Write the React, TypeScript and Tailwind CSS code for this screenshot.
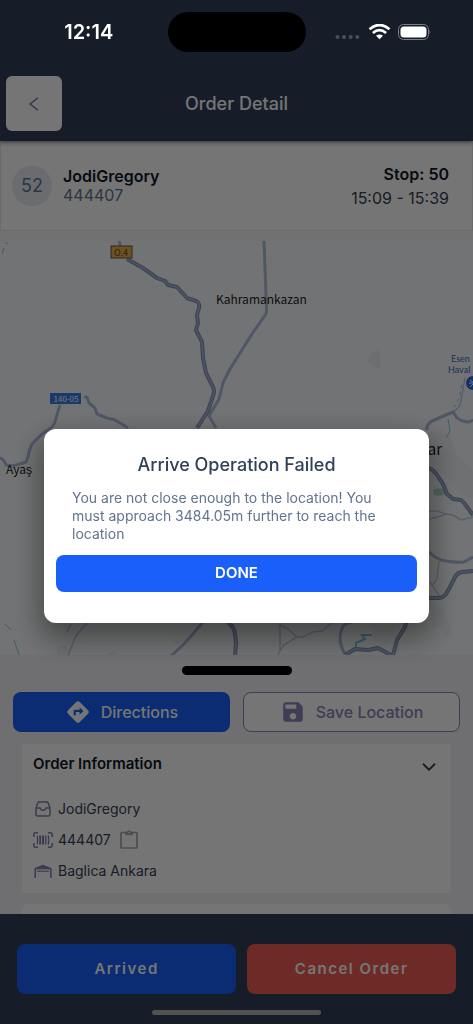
import { type ReactNode } from "react";
import { ChevronDown } from "lucide-react";
import { MdDirections, MdSave } from "react-icons/md";

interface Order {
  sequence: number;
  customer: string;
  orderNo: string;
  stop: number;
  window: string;
  address: string;
}

const order: Order = {
  sequence: 52,
  customer: "JodiGregory",
  orderNo: "444407",
  stop: 50,
  window: "15:09 - 15:39",
  address: "Baglica Ankara",
};

const highways = [
  "M127 259L143 268L157 278L165 281L168 285L177 287L187 298L196 301Q200 303 199 308L197 315L198 323L196 330L202 342L203 358L206 373L213 387Q215 391 213 396L208 411L197 428",
  "M429 468Q434 470 437 475L443 484L447 494L453 499L461 500Q465 503 467 507L473 515",
  "M429 598H438Q443 598 446 594L450 587L455 577Q457 573 462 572L473 571",
  "M228 622Q235 628 235 634L236 642L235 656",
  "M345 655L355 649L368 650L378 648L391 655M393 655L397 640L405 627L408 615",
];

const roads = [
  "M119 241L121 248",
  "M264 241L266 295Q267 310 266 314L252 334L235 361L230 369L223 383L219 399L209 416L216 428",
  "M60 405L56 418Q55 424 52 427L42 434L32 444Q29 450 28 457L26 462L13 466L6 465Q4 459 0 458",
  "M84 397H87L89 403L95 408L97 414L107 418L115 420L128 428",
  "M427 430Q426 425 432 421L453 412L457 418Q463 422 469 422L473 420",
  "M203 622L192 635L183 645L171 656",
  "M355 621L345 624Q341 628 340 637Q340 646 345 654",
  "M429 552Q434 557 441 560Q455 563 464 562L473 557",
];

const lanes = [
  "M465 378L461 400Q460 408 453 412",
  "M429 511L437 511L446 514Q437 518 429 519M446 514L453 515L461 520L473 517",
  "M439 562L437 577Q436 583 431 585M430 582L440 597",
  "M87 623L79 632L75 638L68 656",
  "M280 623V650L278 655M280 625L288 629L297 637L284 645L279 652M297 637H303L313 632L322 631L333 622",
];

function StatusBar() {
  return (
    <div className="fixed inset-x-0 top-0 z-30 grid h-16 grid-cols-[1fr_138px_1fr] items-center text-white">
      <time className="pl-2.5 text-center text-xl font-semibold">12:14</time>
      <div className="h-10 rounded-full bg-black" />
      <div className="flex items-center justify-center pr-3">
        <svg className="h-4 w-24" viewBox="0 0 96 16" fill="none">
          <g fill="#4a5059">
            <circle cx="2.5" cy="13" r="2" />
            <circle cx="9" cy="13" r="2" />
            <circle cx="15.700" cy="13" r="2" />
            <circle cx="22.300" cy="13" r="2" />
          </g>
          <g stroke="#fff" strokeWidth="2.700">
            <path d="M34.500 5.200Q44.500 -3.200 54.500 5.200" />
            <path d="M37.900 8.900Q44.500 3.200 51.100 8.900" />
          </g>
          <path d="M41 11.800Q44.500 9 48 11.800L44.500 15.200Z" fill="#fff" />
          <rect x="63.500" y=".5" width="30" height="15" rx="5" stroke="#7b7f85" />
          <rect x="65.500" y="2.500" width="26" height="11" rx="3.500" fill="#fff" />
          <path d="M94.500 5.500Q96 8 94.500 10.500Z" fill="#7b7f85" />
        </svg>
      </div>
    </div>
  );
}

function OrderMap() {
  return (
    <svg
      className="min-h-40 w-full flex-1 bg-[#f8fbfd] font-['Noto_Sans_CJK_SC',sans-serif]"
      viewBox="0 241 473 414"
      preserveAspectRatio="xMidYMid slice"
      role="img"
      aria-label="Map"
    >
      {/* Built-up areas */}
      <g fill="#eceff2">
        <path d="M372 352L379 350L381 369L373 366L367 361Z" />
        <path d="M57 648L65 645L70 650L68 655H57Z" />
        <path d="M106 655L112 651L118 653V655Z" />
        <path d="M172 639L182 640L177 645Z" />
      </g>
      <g fill="#f1f4f6">
        <path d="M429 432L444 430L452 440L456 455L473 470V498L462 495L450 480L438 470L429 462Z" />
        <path d="M372 625L394 626L397 636L384 646L374 641Z" />
        <path d="M430 600L441 606L453 634L446 638L440 628L432 626Z" />
      </g>
      <path d="M433 490Q438 487 446 489L446 494Q440 497 434 495Z" fill="#b2dcc6" />

      {/* Streams */}
      <g stroke="#7fc8ea" strokeWidth="1" fill="none">
        <path d="M5 242L8 244M4 248L2 254" />
        <path d="M462 385L459 398L452 411" strokeDasharray="3 4" />
        <path d="M448 419L450 431L446 438" />
        <path d="M5 624L11 630M14 640L19 655M71 624L67 632" />
        <path d="M356 650V643L365 639L362 635H372" strokeWidth="2" />
      </g>

      <g fill="none" strokeLinejoin="round">
        {lanes.map((d) => (
          <path key={d} d={d} stroke="#c3cde6" strokeWidth="1.500" />
        ))}
        {roads.map((d) => (
          <path key={d} d={d} stroke="#adbbdb" strokeWidth="3" />
        ))}
        {highways.map((d) => (
          <path key={d} d={d} stroke="#8390ae" strokeWidth="4" />
        ))}
        {highways.map((d) => (
          <path key={d} d={d} stroke="#a5b4d4" strokeWidth="2" />
        ))}
      </g>

      {/* Road shields */}
      <rect x="111" y="246" width="21" height="12" fill="#eab04f" stroke="#6b5a3c" />
      <text x="121" y="256" textAnchor="middle" fontSize="9" fill="#6b4f1c">O.4</text>
      <rect x="50" y="393" width="31" height="11" fill="#3a80e8" />
      <text x="66" y="402" textAnchor="middle" fontSize="8" fill="#fff">140-05</text>

      <g fill="#1c1c1c">
        <text x="216" y="304" fontSize="12">Kahramankazan</text>
        <text x="6" y="474" fontSize="12">Ayaş</text>
        <text x="442" y="455" textAnchor="end" fontSize="15">Pursaklar</text>
      </g>
      <text fill="#3f6fc0" fontSize="9" className="font-['Lato',sans-serif]">
        <tspan x="451" y="362">Esen</tspan>
        <tspan x="448" y="373">Haval</tspan>
      </text>
      <circle cx="473" cy="383" r="7" fill="#2b6ce0" />
      <path d="M470 380L474 383L470 387M469 383H473" stroke="#fff" fill="none" />
    </svg>
  );
}

function InfoRow({ icon, children }: { icon: ReactNode; children: ReactNode }) {
  return (
    <li className="flex h-[31px] items-center gap-[5px]">
      <span className="flex w-5 justify-center text-[#827cae]">{icon}</span>
      {children}
    </li>
  );
}

function TrayIcon() {
  return (
    <svg width="16" height="16" viewBox="0 0 16 16" fill="none" stroke="currentColor" strokeWidth="1.400" strokeLinejoin="round">
      <path d="M1 7L3 1.500Q3.200 1 4 1H12Q12.800 1 13 1.500L15 7V13.500Q15 15 13.500 15H2.500Q1 15 1 13.500Z" />
      <path d="M1 7H5.300Q5.600 9.300 8 9.300T10.700 7H15" />
    </svg>
  );
}

function BarcodeIcon() {
  return (
    <svg width="20" height="16" viewBox="0 0 20 16" fill="none" stroke="currentColor">
      <path d="M5 .8H2.500Q.8 .8 .8 2.500V5M15 .8H17.500Q19.200 .8 19.200 2.500V5M5 15.200H2.500Q.8 15.200 .8 13.500V11M15 15.200H17.500Q19.200 15.200 19.200 13.500V11" strokeWidth="1.500" />
      <path d="M4.500 3.500V12.500M15.500 3.500V12.500M12.700 3.500V12.500" strokeWidth="1.300" />
      <path d="M7.200 3.500V12.500M10.100 3.500V12.500" strokeWidth="2" />
    </svg>
  );
}

function WarehouseIcon() {
  return (
    <svg width="18" height="14" viewBox="0 0 18 14" fill="none" stroke="currentColor">
      <path d="M1.200 14V4.800L9 1.600L16.800 4.800V14" strokeWidth="1.500" />
      <path d="M1.500 4.800L9 1.600L16.500 4.800Z" fill="currentColor" />
      <path d="M3 7.200H15" strokeWidth="1.200" />
    </svg>
  );
}

function ClipboardIcon() {
  return (
    <svg width="18" height="19" viewBox="0 0 18 19" fill="none" stroke="currentColor" strokeWidth="1.700" strokeLinejoin="round">
      <path d="M5.500 2.500H1.500Q1 2.500 1 3V17.500Q1 18 1.500 18H16.500Q17 18 17 17.500V3Q17 2.500 16.500 2.500H12.500" />
      <path d="M5.500 2V4.800H12.500V2H10.800Q10.300 .8 9 .8T7.200 2Z" fill="currentColor" strokeWidth="1" />
      <circle cx="9" cy="2.500" r=".8" fill="#fff" stroke="none" />
    </svg>
  );
}

function FailedDialog() {
  return (
    <div className="fixed inset-0 z-20 flex items-center justify-center bg-black/54 px-11 pt-[62px] pb-[34px]">
      <div
        role="dialog"
        aria-modal="true"
        aria-labelledby="dialog-title"
        className="w-full max-w-md rounded-xl bg-white px-3 pt-6 pb-[31px] shadow-[0_12px_28px_4px_rgba(0,0,0,0.4)]"
      >
        <h2 id="dialog-title" className="text-center text-lg leading-6 font-medium text-slate-700">
          Arrive Operation Failed
        </h2>
        <p className="mt-3 px-4 text-sm leading-[18px] text-slate-500">
          You are not close enough to the location! You must approach 3484.05m further to reach the location
        </p>
        <button type="button" className="mt-3 h-[37px] w-full rounded-lg bg-[#1a5ff9] text-[15px] font-semibold text-white">
          DONE
        </button>
      </div>
    </div>
  );
}

export default function App() {
  return (
    <div className="flex h-screen flex-col overflow-hidden bg-[#f6f6f6] font-['Inter',sans-serif]">
      <StatusBar />

      <header className="z-10 grid grid-cols-[56px_1fr_56px] items-center bg-slate-700 px-1.5 pt-[76px] pb-2.5 shadow-[0_2px_4px_rgba(0,0,0,0.4)]">
        <button type="button" aria-label="Back" className="flex h-[55px] items-center justify-center rounded-md bg-white text-[#827cae]">
          <svg width="10" height="14" viewBox="0 0 10 14" fill="none" stroke="currentColor" strokeWidth="1.500">
            <path d="M9 .8L1 7L9 13.200" />
          </svg>
        </button>
        <h1 className="text-center text-lg font-medium text-white">Order Detail</h1>
      </header>

      {/* Stop summary */}
      <section className="mb-2.5 flex h-[90px] items-center border border-gray-200 bg-white pr-[23px] pl-[11px]">
        <div className="flex size-10 items-center justify-center rounded-full bg-[#e8ecf5] text-lg text-slate-500">
          {order.sequence}
        </div>
        <div className="ml-[11px] flex-1 leading-[19px]">
          <p className="font-semibold text-gray-900">{order.customer}</p>
          <p className="text-slate-500">{order.orderNo}</p>
        </div>
        <div className="text-right leading-6">
          <p className="font-semibold text-gray-900">Stop: {order.stop}</p>
          <p className="text-gray-700">{order.window}</p>
        </div>
      </section>

      <OrderMap />

      {/* Bottom sheet */}
      <section className="h-[259px] overflow-hidden bg-[#f1f1f6]">
        <div className="mx-auto mt-[11px] h-[9px] w-[110px] rounded-full bg-black" />
        <div className="mt-[17px] grid grid-cols-2 gap-[13px] px-[13px]">
          <button type="button" className="flex h-10 items-center justify-center gap-2.5 rounded-lg bg-[#1a5ff9] font-medium text-white">
            <MdDirections size={26} />
            Directions
          </button>
          <button type="button" className="flex h-10 items-center justify-center gap-2.5 rounded-lg border border-[#8a84b6] bg-white font-medium text-[#8a84b6]">
            <MdSave size={26} />
            Save Location
          </button>
        </div>

        <div className="mx-[22px] mt-3 h-[149px] bg-white px-[11px] pt-1.5">
          <div className="flex items-center justify-between">
            <h2 className="text-[15px] font-semibold text-gray-900">Order Information</h2>
            <button type="button" aria-label="Collapse" className="pt-1.5 text-gray-700">
              <ChevronDown size={22} strokeWidth={2} />
            </button>
          </div>
          <ul className="mt-[15px] text-sm text-gray-700">
            <InfoRow icon={<TrayIcon />}>{order.customer}</InfoRow>
            <InfoRow icon={<BarcodeIcon />}>
              {order.orderNo}
              <button type="button" aria-label="Copy order number" className="ml-1 text-[#aaa]">
                <ClipboardIcon />
              </button>
            </InfoRow>
            <InfoRow icon={<WarehouseIcon />}>{order.address}</InfoRow>
          </ul>
        </div>
        <div className="mx-[22px] mt-[11px] h-16 rounded-md bg-white" />
      </section>

      <footer className="flex h-[110px] gap-[11px] bg-slate-700 px-[17px] pt-[30px]">
        <button type="button" className="h-[50px] flex-[21] rounded-lg bg-[#1a5ff9] text-[15px] font-semibold tracking-widest text-white">
          Arrived
        </button>
        <button type="button" className="h-[50px] flex-[20] rounded-lg bg-[#ef5d56] text-[15px] font-semibold tracking-widest text-white">
          Cancel Order
        </button>
      </footer>

      <FailedDialog />
      <div className="fixed inset-x-0 bottom-[9px] z-30 mx-auto h-[5px] w-[169px] rounded-full bg-[#515151]" />
    </div>
  );
}
